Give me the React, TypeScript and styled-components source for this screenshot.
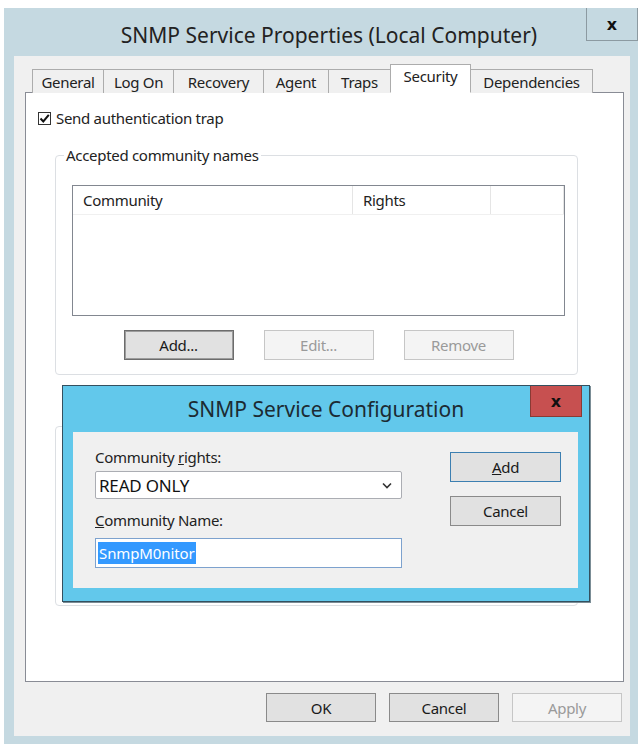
import styled, { createGlobalStyle } from "styled-components";

const GlobalStyle = createGlobalStyle`
  html, body {
    margin: 0;
    padding: 0;
    background: #ffffff;
  }
  body {
    font-family: "Noto Sans", "Open Sans", sans-serif;
    color: #1a1a1a;
  }
`;

const Window = styled.div`
  margin: 8px 0 0 4px;
  width: 634px;
  height: 736px;
  box-sizing: border-box;
  padding: 0 8px 8px 10px;
  background: #c5d9e1;
  display: flex;
  flex-direction: column;
`;

const TitleBar = styled.div`
  position: relative;
  height: 48px;
  display: flex;
  align-items: center;
  justify-content: center;
  padding: 6px 0 0 14px;
  box-sizing: border-box;
  font-size: 21px;
  color: #222;
`;

const CloseButton = styled.div<{ $danger?: boolean }>`
  position: absolute;
  top: 0;
  right: ${(p) => (p.$danger ? "7px" : "-8px")};
  width: 52px;
  height: ${(p) => (p.$danger ? "31px" : "33px")};
  box-sizing: border-box;
  border: 1px solid ${(p) => (p.$danger ? "#8a3a34" : "#8c9aa1")};
  border-top: none;
  background: ${(p) => (p.$danger ? "#c75050" : "transparent")};
  display: flex;
  align-items: center;
  justify-content: center;
  font-family: "DejaVu Sans", sans-serif;
  font-weight: bold;
  font-size: 16px;
  color: #111;
`;

const Panel = styled.div`
  flex: 1;
  background: #f0f0f0;
  padding: 8px 6px 0 11px;
  display: flex;
  flex-direction: column;
`;

const TabStrip = styled.div`
  display: flex;
  align-items: flex-end;
  height: 29px;
  padding-left: 7px;
  margin-bottom: -1px;
  position: relative;
  z-index: 1;
`;

const Tab = styled.div<{ $active?: boolean; $width: number }>`
  width: ${(p) => p.$width}px;
  height: ${(p) => (p.$active ? "29px" : "24px")};
  box-sizing: border-box;
  padding-top: ${(p) => (p.$active ? "1px" : "2px")};
  margin-left: -1px;
  border: 1px solid #acacac;
  border-bottom: ${(p) => (p.$active ? "1px solid #fff" : "none")};
  background: ${(p) => (p.$active ? "#ffffff" : "#f0f0f0")};
  text-align: center;
  font-size: 15px;
  letter-spacing: -0.3px;
  line-height: 20px;
  color: #222;
  position: relative;
  z-index: ${(p) => (p.$active ? 2 : 0)};
  &:first-child {
    margin-left: 0;
  }
`;

const TabPage = styled.div`
  position: relative;
  height: 590px;
  box-sizing: border-box;
  border: 1px solid #898c95;
  background: #ffffff;
  padding: 15px 45px 0 12px;
  display: flex;
  flex-direction: column;
`;

const CheckRow = styled.label`
  display: flex;
  align-items: center;
  gap: 5px;
  height: 20px;
  font-size: 15px;
  letter-spacing: -0.3px;
  color: #222;
`;

const CheckBox = styled.span`
  width: 13px;
  height: 13px;
  box-sizing: border-box;
  border: 1px solid #333;
  background: #fff;
  display: flex;
  align-items: center;
  justify-content: center;
`;

const Group = styled.fieldset<{ $top: number; $height?: number }>`
  margin: ${(p) => p.$top}px 0 0 17px;
  height: ${(p) => (p.$height ? `${p.$height}px` : "auto")};
  box-sizing: border-box;
  border: 1px solid #dcdfe3;
  border-radius: 4px;
  padding: 20px 12px 14px 8px;
  min-width: 0;
`;

const Legend = styled.legend`
  font-size: 15px;
  letter-spacing: -0.3px;
  line-height: 20px;
  padding: 0 2px;
  color: #222;
`;

const GroupBody = styled.div`
  display: flex;
  flex-direction: column;
  padding-left: 8px;
`;

const ListView = styled.div`
  height: 131px;
  box-sizing: border-box;
  border: 1px solid #828790;
  background: #fff;
`;

const ListHeader = styled.div`
  display: grid;
  grid-template-columns: 280px 138px 1fr;
  height: 28px;
  border-bottom: 1px solid #f0f0f0;
`;

const HeaderCell = styled.div`
  display: flex;
  align-items: center;
  padding-left: 10px;
  border-right: 1px solid #e5e5e5;
  font-size: 15px;
  letter-spacing: -0.3px;
  color: #222;
`;

const ButtonRow = styled.div<{ $end?: boolean }>`
  display: flex;
  justify-content: ${(p) => (p.$end ? "flex-end" : "center")};
  gap: ${(p) => (p.$end ? "13px" : "30px")};
  margin-top: ${(p) => (p.$end ? "11px" : "14px")};
  padding-right: ${(p) => (p.$end ? "2px" : "0")};
`;

const Button = styled.div<{ $disabled?: boolean; $focused?: boolean; $default?: boolean; $tall?: boolean }>`
  width: ${(p) => (p.$default !== undefined ? "111px" : "110px")};
  height: ${(p) => (p.$default !== undefined || p.$tall ? "30px" : "29px")};
  box-sizing: border-box;
  border: 1px solid
    ${(p) =>
      p.$default ? "#3c7fb1" : p.$disabled ? "#c6c6c6" : p.$focused ? "#6c6c6c" : "#8a8a8a"};
  box-shadow: ${(p) => (p.$focused ? "inset 0 0 0 1px #9c9c9c" : "none")};
  background: ${(p) => (p.$disabled ? "#f4f4f4" : "#e1e1e1")};
  color: ${(p) => (p.$disabled ? "#9a9a9a" : "#1a1a1a")};
  display: flex;
  align-items: center;
  justify-content: center;
  font-size: 15px;
  letter-spacing: -0.3px;
`;

/* Modal configuration window that sits on top of the property page */
const Dialog = styled.div`
  position: absolute;
  left: 36px;
  top: 292px;
  width: 528px;
  height: 217px;
  box-sizing: border-box;
  border: 1px solid #34505f;
  background: #62c8eb;
  display: flex;
  flex-direction: column;
  box-shadow: 1px 1px 0 #7b8d96;
`;

const DialogTitle = styled(TitleBar)`
  height: 46px;
  padding: 0;
  font-size: 21px;
  color: #1c2b33;
`;

const DialogClient = styled.div`
  flex: 1;
  margin: 0 11px 13px 10px;
  background: #f0f0f0;
  display: grid;
  grid-template-columns: 307px 111px;
  column-gap: 48px;
  padding: 15px 0 0 22px;
`;

const FormColumn = styled.div`
  display: flex;
  flex-direction: column;
`;

const ButtonColumn = styled.div`
  display: flex;
  flex-direction: column;
  gap: 14px;
  padding-top: 5px;
`;

const FieldLabel = styled.div<{ $gap?: number }>`
  font-size: 15px;
  letter-spacing: -0.3px;
  color: #222;
  margin-top: ${(p) => p.$gap ?? 0}px;
  line-height: 20px;
`;

const Key = styled.span`
  text-decoration: underline;
`;

const Combo = styled.div`
  margin-top: 4px;
  height: 28px;
  box-sizing: border-box;
  border: 1px solid #abadb3;
  border-radius: 2px;
  background: #fff;
  display: flex;
  align-items: center;
  justify-content: space-between;
  padding: 0 9px 0 3px;
  font-size: 17px;
  letter-spacing: -0.2px;
  color: #111;
`;

const TextBox = styled.div`
  margin-top: 8px;
  height: 30px;
  box-sizing: border-box;
  border: 1px solid #7da2ce;
  background: #fff;
  display: flex;
  align-items: center;
  padding-left: 2px;
`;

const Selection = styled.span`
  background: #3399ff;
  color: #fff;
  font-size: 15px;
  letter-spacing: -0.1px;
  line-height: 22px;
  padding: 0 1px;
`;

const tabs = [
  { label: "General", width: 72 },
  { label: "Log On", width: 71 },
  { label: "Recovery", width: 91 },
  { label: "Agent", width: 66 },
  { label: "Traps", width: 63 },
  { label: "Security", width: 81 },
  { label: "Dependencies", width: 123 },
];

export default function App() {
  return (
    <>
      <GlobalStyle />
      <Window>
        <TitleBar>
          SNMP Service Properties (Local Computer)
          <CloseButton>x</CloseButton>
        </TitleBar>
        <Panel>
          <TabStrip>
            {tabs.map((t) => (
              <Tab key={t.label} $width={t.width} $active={t.label === "Security"}>
                {t.label}
              </Tab>
            ))}
          </TabStrip>
          <TabPage>
            <CheckRow>
              <CheckBox>
                <svg width="11" height="11" viewBox="0 0 11 11">
                  <path d="M1.5 5.5 L4.3 8.5 L9.8 1.8" fill="none" stroke="#111" strokeWidth="2" />
                </svg>
              </CheckBox>
              Send authentication trap
            </CheckRow>

            <Group $top={17}>
              <Legend>Accepted community names</Legend>
              <GroupBody>
                <ListView>
                  <ListHeader>
                    <HeaderCell>Community</HeaderCell>
                    <HeaderCell>Rights</HeaderCell>
                    <HeaderCell />
                  </ListHeader>
                </ListView>
                <ButtonRow>
                  <Button $focused $tall>Add...</Button>
                  <Button $disabled $tall>Edit...</Button>
                  <Button $disabled $tall>Remove</Button>
                </ButtonRow>
              </GroupBody>
            </Group>

            <Group $top={51} $height={180} />

            <Dialog>
              <DialogTitle>
                SNMP Service Configuration
                <CloseButton $danger>x</CloseButton>
              </DialogTitle>
              <DialogClient>
                <FormColumn>
                  <FieldLabel>
                    Community <Key>r</Key>ights:
                  </FieldLabel>
                  <Combo>
                    READ ONLY
                    <svg width="10" height="7" viewBox="0 0 10 7">
                      <path d="M1 1.5 L5 5.5 L9 1.5" fill="none" stroke="#333" strokeWidth="1.6" />
                    </svg>
                  </Combo>
                  <FieldLabel $gap={11}>
                    <Key>C</Key>ommunity Name:
                  </FieldLabel>
                  <TextBox>
                    <Selection>SnmpM0nitor</Selection>
                  </TextBox>
                </FormColumn>
                <ButtonColumn>
                  <Button $default>
                    <Key>A</Key>dd
                  </Button>
                  <Button $default={false}>Cancel</Button>
                </ButtonColumn>
              </DialogClient>
            </Dialog>
          </TabPage>
          <ButtonRow $end>
            <Button>OK</Button>
            <Button>Cancel</Button>
            <Button $disabled>Apply</Button>
          </ButtonRow>
        </Panel>
      </Window>
    </>
  );
}
